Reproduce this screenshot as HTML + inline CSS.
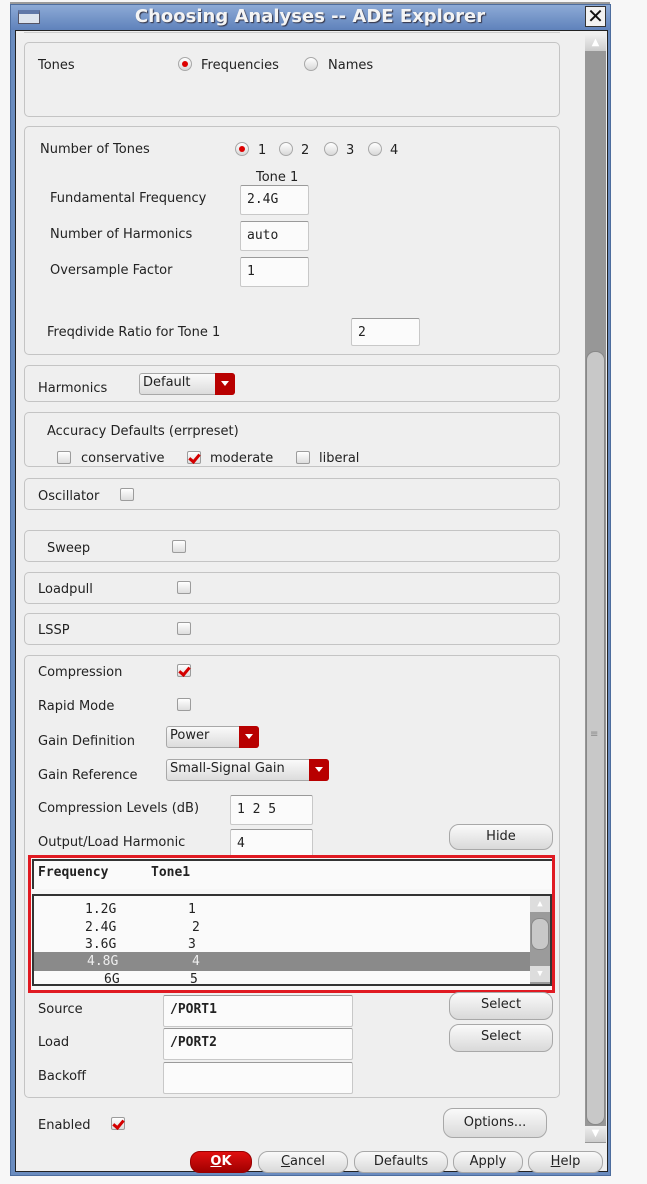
<!DOCTYPE html>
<html><head><meta charset="utf-8"><style>
*{box-sizing:border-box;margin:0;padding:0}
body{width:647px;height:1184px;background:#f7f7f7;position:relative;overflow:hidden;font-family:"DejaVu Sans","Liberation Sans",sans-serif;font-size:13px;color:#222}
.a{position:absolute}
.p{position:absolute;left:24px;width:536px;border:1px solid #c4c4c4;border-radius:5px;background:#efefef}
.t{position:absolute;white-space:nowrap;margin-top:1px}
.in{position:absolute;background:#fbfbfb;border:1px solid #c8c8c8;border-top-color:#9a9a9a;border-radius:2px;font-family:"DejaVu Sans Mono","Liberation Mono",monospace;font-size:13px;padding:6px 0 0 6px}
.cb{position:absolute;width:14px;height:13px;border:1px solid #9c9c9c;border-radius:2px;background:linear-gradient(#fff,#ddd)}
.ck::after{content:"";position:absolute;left:3px;top:0px;width:4px;height:8px;border-right:3px solid #d40000;border-bottom:3px solid #d40000;transform:rotate(40deg)}
.rb{position:absolute;width:14px;height:14px;border-radius:50%;border:1px solid #a8a8a8;background:linear-gradient(#fff,#d8d8d8)}
.rb.on::after{content:"";position:absolute;left:3px;top:3px;width:6px;height:6px;border-radius:50%;background:#d00}
.btn{position:absolute;border:1px solid #a8a8a8;border-radius:10px;background:linear-gradient(#fafafa,#d9d9d9);text-align:center;font-size:13px;line-height:24px}
.dd{position:absolute;height:22px;border:1px solid #a8a8a8;border-radius:3px;background:linear-gradient(#fafafa,#dcdcdc);padding-left:3px;line-height:18px;font-size:13px}
.dd b{position:absolute;right:-1px;top:-1px;width:20px;height:22px;background:#b80000;border-radius:0 3px 3px 0}
.dd b::after{content:"";position:absolute;left:6px;top:8px;border:4px solid transparent;border-top:5px solid #fff}
</style></head><body>
<div class="a" style="left:10px;top:2px;width:600px;height:3px;background:#9a9a9a"></div>
<div class="a" style="left:10px;top:4px;width:601px;height:1172px;background:#6a8cbf;border:1px solid #4d6d9e"></div>
<div class="a" style="left:11px;top:5px;width:599px;height:25px;background:linear-gradient(#8daad6,#5f82bb)"></div>
<div class="a" style="left:18px;top:10px;width:22px;height:14px;background:#dde4ee;border:1px solid #556;border-top:4px solid #6078a8"></div>
<div class="t" style="left:0;width:620px;text-align:center;top:5px;font-weight:bold;font-size:18px;color:#f4f4f4;text-shadow:1px 1px 1px #334">Choosing Analyses -- ADE Explorer</div>
<div class="a" style="left:585px;top:6px;width:21px;height:21px;background:#f2f2f2;border:1px solid #333;font-size:20px;line-height:18px;text-align:center;color:#111">✕</div>
<div class="a" style="left:15px;top:30px;width:593px;height:1142px;background:#efefef;border:1px solid #222"></div>
<div class="a" style="left:24px;top:32px;width:536px;height:2px;border-top:1px solid #ccc"></div>
<div class="a" style="left:585px;top:35px;width:21px;height:1108px;background:#979797"></div>
<div class="a" style="left:585px;top:35px;width:21px;height:16px;background:linear-gradient(#eee,#ccc);color:#fff;font-size:10px;text-align:center;line-height:16px">▲</div>
<div class="a" style="left:586px;top:351px;width:19px;height:774px;background:#c8c8c8;border:1px solid #888;border-radius:9px"></div>
<div class="t" style="left:590px;top:728px;font-size:10px;color:#888">≡</div>
<div class="a" style="left:585px;top:1126px;width:21px;height:16px;background:linear-gradient(#eee,#ccc);color:#fff;font-size:10px;text-align:center;line-height:16px">▼</div>

<div class="p" style="top:42px;height:75px"></div>
<div class="t" style="left:38px;top:57px">Tones</div>
<div class="rb on" style="left:178px;top:57px"></div><div class="t" style="left:201px;top:57px">Frequencies</div>
<div class="rb" style="left:304px;top:57px"></div><div class="t" style="left:328px;top:57px">Names</div>
<div class="p" style="top:126px;height:229px"></div>
<div class="t" style="left:40px;top:141px">Number of Tones</div>
<div class="rb on" style="left:235px;top:142px"></div><div class="t" style="left:258px;top:142px">1</div>
<div class="rb" style="left:279px;top:142px"></div><div class="t" style="left:301px;top:142px">2</div>
<div class="rb" style="left:324px;top:142px"></div><div class="t" style="left:346px;top:142px">3</div>
<div class="rb" style="left:368px;top:142px"></div><div class="t" style="left:390px;top:142px">4</div>
<div class="t" style="left:256px;top:169px">Tone 1</div>
<div class="t" style="left:50px;top:190px">Fundamental Frequency</div>
<div class="in" style="left:240px;top:185px;width:69px;height:30px">2.4G</div>
<div class="t" style="left:50px;top:226px">Number of Harmonics</div>
<div class="in" style="left:240px;top:221px;width:69px;height:30px">auto</div>
<div class="t" style="left:50px;top:262px">Oversample Factor</div>
<div class="in" style="left:240px;top:257px;width:69px;height:30px">1</div>
<div class="t" style="left:47px;top:324px">Freqdivide Ratio for Tone 1</div>
<div class="in" style="left:351px;top:318px;width:69px;height:28px">2</div>
<div class="p" style="top:365px;height:37px"></div>
<div class="t" style="left:38px;top:380px">Harmonics</div>
<div class="dd" style="left:139px;top:373px;width:96px">Default<b></b></div>
<div class="p" style="top:412px;height:55px"></div>
<div class="t" style="left:47px;top:423px">Accuracy Defaults (errpreset)</div>
<div class="cb" style="left:57px;top:451px"></div><div class="t" style="left:81px;top:450px">conservative</div>
<div class="cb ck" style="left:187px;top:451px"></div><div class="t" style="left:210px;top:450px">moderate</div>
<div class="cb" style="left:296px;top:451px"></div><div class="t" style="left:319px;top:450px">liberal</div>
<div class="p" style="top:478px;height:32px"></div>
<div class="t" style="left:38px;top:488px">Oscillator</div>
<div class="cb" style="left:120px;top:488px"></div>
<div class="p" style="top:530px;height:32px"></div>
<div class="t" style="left:47px;top:540px">Sweep</div>
<div class="cb" style="left:172px;top:540px"></div>
<div class="p" style="top:572px;height:32px"></div>
<div class="t" style="left:38px;top:581px">Loadpull</div>
<div class="cb" style="left:177px;top:581px"></div>
<div class="p" style="top:613px;height:32px"></div>
<div class="t" style="left:38px;top:622px">LSSP</div>
<div class="cb" style="left:177px;top:622px"></div>
<div class="p" style="top:655px;height:443px"></div>
<div class="t" style="left:38px;top:664px">Compression</div>
<div class="cb ck" style="left:177px;top:664px"></div>
<div class="t" style="left:38px;top:698px">Rapid Mode</div>
<div class="cb" style="left:177px;top:698px"></div>
<div class="t" style="left:38px;top:733px">Gain Definition</div>
<div class="dd" style="left:166px;top:726px;width:93px">Power<b></b></div>
<div class="t" style="left:38px;top:767px">Gain Reference</div>
<div class="dd" style="left:166px;top:759px;width:163px">Small-Signal Gain<b></b></div>
<div class="t" style="left:38px;top:800px">Compression Levels (dB)</div>
<div class="in" style="left:230px;top:795px;width:83px;height:30px">1 2 5</div>
<div class="t" style="left:38px;top:834px">Output/Load Harmonic</div>
<div class="in" style="left:230px;top:829px;width:83px;height:30px">4</div>
<div class="btn" style="left:449px;top:824px;width:104px;height:26px">Hide</div>
<div class="a" style="left:28px;top:855px;width:527px;height:138px;border:3px solid #e01a22;background:#f7f7f7"></div>
<div class="a" style="left:32px;top:859px;width:520px;height:30px;border-top:2px solid #333;border-left:2px solid #333;background:#fafafa"></div>
<div class="t" style="left:38px;top:864px;font-family:'DejaVu Sans Mono','Liberation Mono',monospace;font-size:13px;font-weight:bold">Frequency</div>
<div class="t" style="left:151px;top:864px;font-family:'DejaVu Sans Mono','Liberation Mono',monospace;font-size:13px;font-weight:bold">Tone1</div>
<div class="a" style="left:32px;top:894px;width:520px;height:92px;border:2px solid #333;background:#fafafa;overflow:hidden;font-family:'DejaVu Sans Mono','Liberation Mono',monospace;font-size:13px">
<div class="t" style="left:51px;top:5px">1.2G</div><div class="t" style="left:154px;top:5px">1</div>
<div class="t" style="left:51px;top:23px">2.4G</div><div class="t" style="left:158px;top:23px">2</div>
<div class="t" style="left:51px;top:40px">3.6G</div><div class="t" style="left:154px;top:40px">3</div>
<div class="a" style="left:0;top:56px;width:496px;height:19px;background:#8a8a8a"></div>
<div class="t" style="left:53px;top:57px;color:#eee">4.8G</div><div class="t" style="left:158px;top:57px;color:#eee">4</div>
<div class="t" style="left:70px;top:75px">6G</div><div class="t" style="left:156px;top:75px">5</div>
<div class="a" style="left:496px;top:0;width:20px;height:90px;background:#9b9b9b"></div>
<div class="a" style="left:496px;top:0;width:20px;height:16px;background:#ddd;color:#fff;font-size:9px;text-align:center;line-height:16px">▲</div>
<div class="a" style="left:497px;top:22px;width:18px;height:32px;background:#c8c8c8;border:1px solid #888;border-radius:8px"></div>
<div class="a" style="left:496px;top:70px;width:20px;height:16px;background:#ddd;color:#fff;font-size:9px;text-align:center;line-height:16px">▼</div>
</div>
<div class="t" style="left:38px;top:1001px">Source</div>
<div class="in" style="left:163px;top:995px;width:190px;height:32px;font-weight:bold">/PORT1</div>
<div class="btn" style="left:449px;top:992px;width:104px;height:28px">Select</div>
<div class="t" style="left:38px;top:1034px">Load</div>
<div class="in" style="left:163px;top:1028px;width:190px;height:32px;font-weight:bold">/PORT2</div>
<div class="btn" style="left:449px;top:1024px;width:104px;height:28px">Select</div>
<div class="t" style="left:38px;top:1068px">Backoff</div>
<div class="in" style="left:163px;top:1062px;width:190px;height:32px"></div>
<div class="t" style="left:38px;top:1117px">Enabled</div>
<div class="cb ck" style="left:111px;top:1117px"></div>
<div class="btn" style="left:443px;top:1108px;width:104px;height:30px;line-height:28px">Options...</div>
<div class="btn" style="left:190px;top:1151px;width:62px;height:22px;line-height:20px;background:linear-gradient(#e01010,#a00000);border-color:#900;color:#fff;font-weight:bold"><u>O</u>K</div>
<div class="btn" style="left:258px;top:1151px;width:90px;height:22px;line-height:20px"><u>C</u>ancel</div>
<div class="btn" style="left:354px;top:1151px;width:94px;height:22px;line-height:20px">Defaults</div>
<div class="btn" style="left:453px;top:1151px;width:70px;height:22px;line-height:20px">Apply</div>
<div class="btn" style="left:528px;top:1151px;width:75px;height:22px;line-height:20px"><u>H</u>elp</div>
</body></html>
